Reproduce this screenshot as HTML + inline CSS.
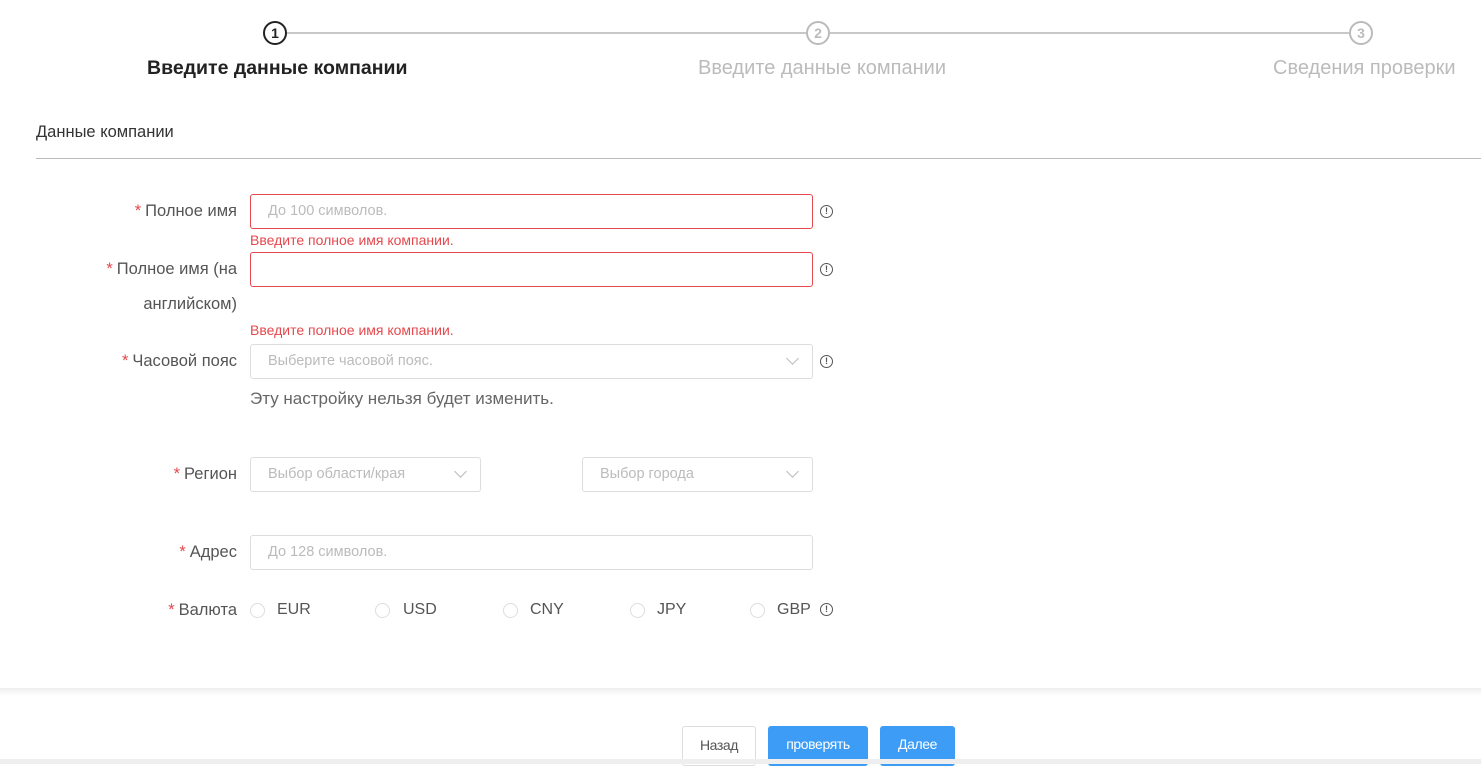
<!DOCTYPE html>
<html><head><meta charset="utf-8"><style>
*{box-sizing:border-box;margin:0;padding:0}
body{width:1481px;height:764px;overflow:hidden;background:#fff;font-family:"Liberation Sans",sans-serif;position:relative;color:#333}
.a{position:absolute}
.circ{position:absolute;width:24px;height:24px;border-radius:50%;border:2px solid #bbb;color:#bbb;font-size:14px;text-align:center;line-height:20px;background:#fff;font-weight:bold}
.st{position:absolute;font-size:20px;color:#bbb;white-space:nowrap}
.lbl{position:absolute;right:1244px;font-size:16.5px;color:#555;white-space:nowrap}
.lbl b{color:#e5484d;font-weight:normal;margin-right:4px}
.inp{position:absolute;height:35px;border:1px solid #ddd;border-radius:3px;font-size:14.5px;color:#bbb;padding-left:17px;line-height:33px}
.err{position:absolute;left:250px;font-size:14px;color:#e5484d}
.info{position:absolute;left:820px;width:13px;height:13px;border:1px solid #555;border-radius:50%;font-size:9px;line-height:11px;text-align:center;color:#555;font-weight:bold}
.chev{position:absolute;width:9px;height:9px;border-right:1px solid #bbb;border-bottom:1px solid #bbb;transform:rotate(45deg)}
.rad{position:absolute;top:603px;width:15px;height:15px;border:1px solid #ddd;border-radius:50%}
.rl{position:absolute;top:601px;font-size:16px;color:#555}
.btn{position:absolute;top:726px;height:40px;border-radius:3px;font-size:14px;text-align:center;line-height:36px;letter-spacing:-0.4px}
</style></head><body>
<div class="a" style="left:287px;top:32px;width:519px;height:2px;background:#c8c8c8"></div>
<div class="a" style="left:830px;top:32px;width:519px;height:2px;background:#c8c8c8"></div>
<div class="circ" style="left:263px;top:21px;border-color:#222;color:#222">1</div>
<div class="circ" style="left:806px;top:21px">2</div>
<div class="circ" style="left:1349px;top:21px">3</div>
<div class="st" style="left:147px;top:57px;color:#222;font-weight:bold;font-size:19.5px">Введите данные компании</div>
<div class="st" style="left:698px;top:57px">Введите данные компании</div>
<div class="st" style="left:1273px;top:57px">Сведения проверки</div>
<div class="a" style="left:36px;top:123px;font-size:16.5px;color:#333">Данные компании</div>
<div class="a" style="left:36px;top:158px;width:1445px;height:1px;background:#bbb"></div>

<div class="lbl" style="top:202px"><b>*</b>Полное имя</div>
<div class="inp" style="left:250px;top:194px;width:563px;border-color:#e5484d">До 100 символов.</div>
<div class="info" style="top:205px">!</div>
<div class="err" style="top:232px">Введите полное имя компании.</div>

<div class="lbl" style="top:260px"><b>*</b>Полное имя (на</div>
<div class="lbl" style="top:295px">английском)</div>
<div class="inp" style="left:250px;top:252px;width:563px;border-color:#e5484d"></div>
<div class="info" style="top:263px">!</div>
<div class="err" style="top:322px">Введите полное имя компании.</div>

<div class="lbl" style="top:352px"><b>*</b>Часовой пояс</div>
<div class="inp" style="left:250px;top:344px;width:563px">Выберите часовой пояс.</div>
<div class="chev" style="left:788px;top:354px"></div>
<div class="info" style="top:355px">!</div>
<div class="a" style="left:250px;top:389px;font-size:17px;color:#666">Эту настройку нельзя будет изменить.</div>

<div class="lbl" style="top:465px"><b>*</b>Регион</div>
<div class="inp" style="left:250px;top:457px;width:231px">Выбор области/края</div>
<div class="chev" style="left:456px;top:467px"></div>
<div class="inp" style="left:582px;top:457px;width:231px">Выбор города</div>
<div class="chev" style="left:788px;top:467px"></div>

<div class="lbl" style="top:543px"><b>*</b>Адрес</div>
<div class="inp" style="left:250px;top:535px;width:563px">До 128 символов.</div>

<div class="lbl" style="top:601px"><b>*</b>Валюта</div>
<div class="rad" style="left:250px"></div><div class="rl" style="left:277px">EUR</div>
<div class="rad" style="left:375px"></div><div class="rl" style="left:403px">USD</div>
<div class="rad" style="left:503px"></div><div class="rl" style="left:530px">CNY</div>
<div class="rad" style="left:630px"></div><div class="rl" style="left:657px">JPY</div>
<div class="rad" style="left:750px"></div><div class="rl" style="left:777px">GBP</div>
<div class="info" style="top:603px">!</div>

<div class="a" style="left:0;top:688px;width:1481px;height:8px;background:linear-gradient(#eee,#fff)"></div>
<div class="btn" style="left:682px;width:74px;border:1px solid #ddd;color:#555;background:#fff">Назад</div>
<div class="btn" style="left:768px;width:100px;background:#3d9cf5;color:#fff">проверять</div>
<div class="btn" style="left:880px;width:75px;background:#3d9cf5;color:#fff">Далее</div>
<div class="a" style="left:0;top:759px;width:1481px;height:5px;background:#eee;z-index:5"></div>
</body></html>
